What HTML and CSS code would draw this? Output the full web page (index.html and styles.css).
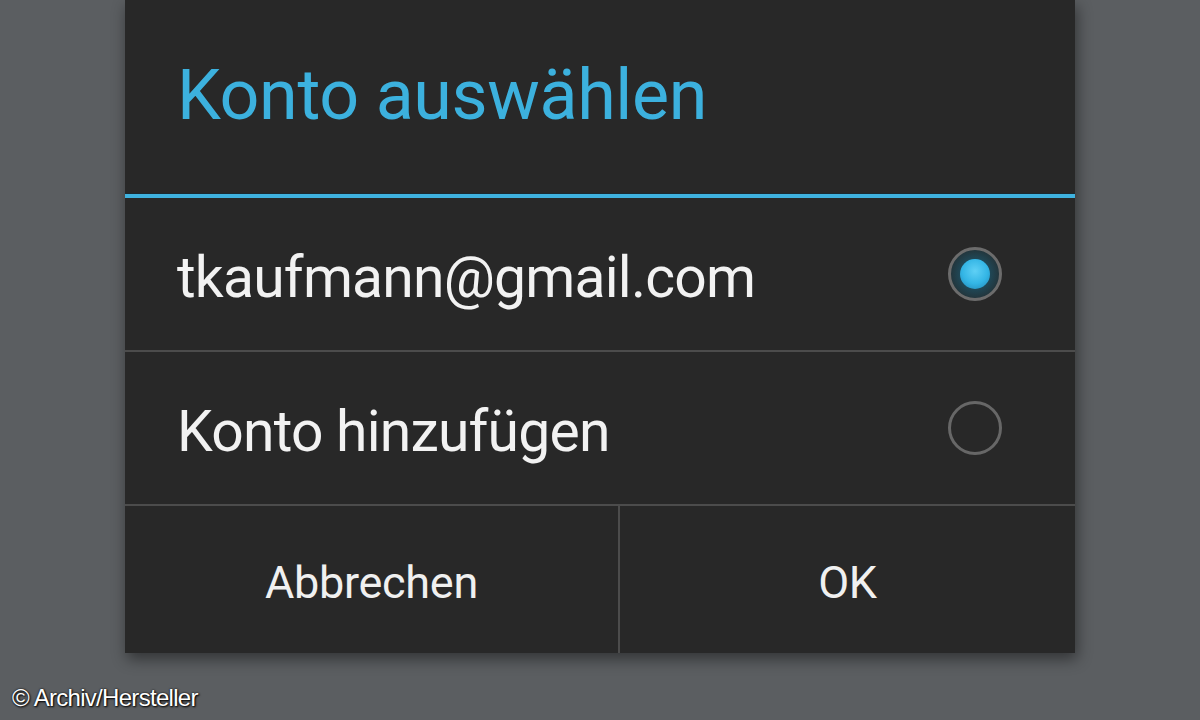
FILE: index.html
```html
<!DOCTYPE html>
<html lang="de">
<head>
<meta charset="utf-8">
<title>Konto auswählen</title>
<link rel="stylesheet" href="styles.css">
</head>
<body>
<div class="stage">
  <div class="dialog">
    <div class="title">Konto auswählen</div>
    <div class="title-rule"></div>
    <div class="row">
      <span class="label">tkaufmann@gmail.com</span>
      <svg class="radio" viewBox="0 0 60 60" width="60" height="60">
        <defs>
          <radialGradient id="dot" cx="50%" cy="40%" r="60%">
            <stop offset="0" stop-color="#5fd0f5"/>
            <stop offset="0.7" stop-color="#33b5e5"/>
            <stop offset="1" stop-color="#2a9ccb"/>
          </radialGradient>
          <radialGradient id="glow" cx="50%" cy="50%" r="50%">
            <stop offset="0.55" stop-color="#1f4a5a"/>
            <stop offset="1" stop-color="#23343a"/>
          </radialGradient>
        </defs>
        <circle cx="30" cy="30" r="25" fill="url(#glow)"/>
        <circle cx="30" cy="30" r="25.5" fill="none" stroke="#6c6c6c" stroke-width="3"/>
        <circle cx="30" cy="30" r="15" fill="url(#dot)"/>
      </svg>
    </div>
    <div class="divider"></div>
    <div class="row">
      <span class="label">Konto hinzufügen</span>
      <svg class="radio" viewBox="0 0 60 60" width="60" height="60">
        <circle cx="30" cy="30" r="25.5" fill="none" stroke="#676767" stroke-width="3"/>
      </svg>
    </div>
    <div class="divider"></div>
    <div class="buttons">
      <div class="btn btn-left">Abbrechen</div>
      <div class="vdivider"></div>
      <div class="btn btn-right">OK</div>
    </div>
  </div>
  <div class="credit">© Archiv/Hersteller</div>
</div>
</body>
</html>
```

FILE: styles.css
```css
html, body {
  margin: 0;
  padding: 0;
  background: #5b5e61;
}

body {
  width: 1200px;
  height: 720px;
  overflow: hidden;
  font-family: Roboto, "Noto Sans", sans-serif;
}

.stage {
  width: 1200px;
  height: 720px;
  display: flex;
  flex-direction: column;
}

.dialog {
  margin-left: 125px;
  width: 950px;
  height: 653px;
  background: #282828;
  display: flex;
  flex-direction: column;
  box-shadow: 2px 6px 14px rgba(0, 0, 0, 0.45);
}

.title {
  height: 133px;
  padding-top: 60px;
  padding-left: 52px;
  font-size: 70px;
  line-height: 1;
  letter-spacing: -0.4px;
  color: #3cb1de;
  box-sizing: content-box;
}

.title-rule {
  height: 4px;
  background: #3fb2df;
  border-top: 1px solid #1b2a30;
}

.row {
  height: 152px;
  display: flex;
  align-items: center;
  justify-content: space-between;
  padding: 6px 73px 0 52px;
  box-sizing: border-box;
}

.row .radio {
  margin-top: -6px;
  margin-right: -3px;
}

.label {
  font-size: 57px;
  line-height: 1;
  letter-spacing: -0.78px;
  color: #f2f2f2;
}

.divider {
  height: 2px;
  background: #4c4c4c;
}

.buttons {
  flex: 1;
  display: flex;
}

.btn {
  display: flex;
  align-items: center;
  justify-content: center;
  padding-top: 6px;
  box-sizing: border-box;
  font-size: 45px;
  line-height: 1;
  letter-spacing: -0.3px;
  color: #f0f0f0;
}

.btn-left {
  width: 493px;
}

.btn-right {
  flex: 1;
}

.vdivider {
  width: 2px;
  background: #4c4c4c;
}

.credit {
  margin-top: 33px;
  margin-left: 12px;
  font-family: "Liberation Sans", Arial, sans-serif;
  font-size: 24px;
  line-height: 1;
  letter-spacing: -0.7px;
  color: #ffffff;
  text-shadow: 1px 1px 2px #000, 0 0 2px #000;
}
```
